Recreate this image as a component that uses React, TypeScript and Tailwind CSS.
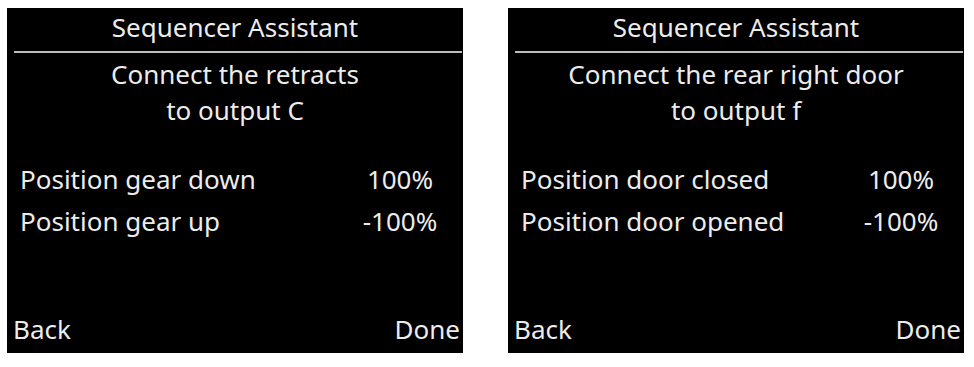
const screens = [
  {
    message: ['Connect the retracts', 'to output C'],
    rows: [
      { label: 'Position gear down', value: '100%' },
      { label: 'Position gear up', value: '-100%' },
    ],
  },
  {
    message: ['Connect the rear right door', 'to output f'],
    rows: [
      { label: 'Position door closed', value: '100%' },
      { label: 'Position door opened', value: '-100%' },
    ],
  },
];

function AssistantScreen({ message, rows }: (typeof screens)[number]) {
  return (
    <div className="w-[456px] h-[345px] bg-black text-[#ececec] text-[26px] flex flex-col">
      {/* Title bar */}
      <div className="pt-[1px] text-center leading-[36px]">Sequencer Assistant</div>
      <div className="mt-[6px] ml-[7px] mr-[1px] h-[2px] bg-[#bdbdbd]" />

      {/* Instruction */}
      <div className="mt-[3px] text-center leading-[36px]">
        {message.map((line) => (
          <div key={line}>{line}</div>
        ))}
      </div>

      {/* Positions */}
      <div className="mt-[30px] pl-[13px] pr-[13px]">
        {rows.map((row) => (
          <div key={row.label} className="flex leading-[42px]">
            <span className="flex-1">{row.label}</span>
            <span className="w-[100px] text-center">{row.value}</span>
          </div>
        ))}
      </div>

      {/* Soft keys */}
      <div className="mt-auto pb-[6px] pl-[6px] pr-[3px] flex justify-between leading-[36px]">
        <span>Back</span>
        <span>Done</span>
      </div>
    </div>
  );
}

export default function App() {
  return (
    <div
      className="w-[974px] h-[367px] bg-white flex gap-[45px] pl-[7px] pt-[8px]"
      style={{ fontFamily: '"Noto Sans", "Open Sans", sans-serif' }}
    >
      {screens.map((s, i) => (
        <AssistantScreen key={i} {...s} />
      ))}
    </div>
  );
}
